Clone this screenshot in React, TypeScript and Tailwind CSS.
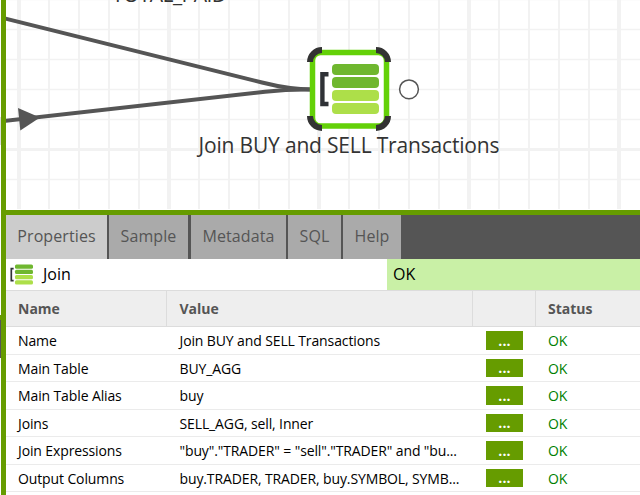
const tabs = [
  { label: 'Properties', cls: 'w-[101px] bg-[#cccccc] mr-[2px]' },
  { label: 'Sample', cls: 'w-[79px] bg-[#aaaaaa] mr-[3px]' },
  { label: 'Metadata', cls: 'w-[95px] bg-[#aaaaaa] mr-[2px]' },
  { label: 'SQL', cls: 'w-[53px] bg-[#aaaaaa] mr-[2px]' },
  { label: 'Help', cls: 'w-[58px] bg-[#aaaaaa]' },
];

const rows = [
  { name: 'Name', value: 'Join BUY and SELL Transactions', h: 'h-[28px]', btn: 'h-[19px]', text: '' },
  { name: 'Main Table', value: 'BUY_AGG', h: 'h-[27px]', btn: 'h-[18px]', text: 'pt-[2px]' },
  { name: 'Main Table Alias', value: 'buy', h: 'h-[28px]', btn: 'h-[19px]', text: '' },
  { name: 'Joins', value: 'SELL_AGG, sell, Inner', h: 'h-[27px]', btn: 'h-[18px]', text: 'pt-[2px]' },
  { name: 'Join Expressions', value: '"buy"."TRADER" = "sell"."TRADER" and "bu...', h: 'h-[28px]', btn: 'h-[19px]', text: '' },
  { name: 'Output Columns', value: 'buy.TRADER, TRADER, buy.SYMBOL, SYMB...', h: 'h-[27px]', btn: 'h-[18px]', text: 'pt-[2px]' },
];

const verticals = Array.from({ length: 21 }, (_, i) => 19 + i * 30);
const horizontals = [0, 1, 2, 3, 4, 5, 6].map((i) => -0.5 + i * 30);

function JoinIcon({ className }: { className: string }) {
  return (
    <svg className={className} viewBox="0 0 60 52" preserveAspectRatio="none">
      <path d="M9.5 11.2H3.4V41H9.5" fill="none" stroke="#2f3236" strokeWidth="4.4" />
      <rect x="13" y="1" width="47" height="11" rx="4" fill="#6fb72f" />
      <rect x="13" y="14" width="47" height="11" rx="4" fill="#6fb72f" />
      <rect x="13" y="27" width="47" height="11" rx="4" fill="#addf49" />
      <rect x="13" y="40" width="47" height="11" rx="4" fill="#addf49" />
    </svg>
  );
}

function Canvas() {
  return (
    <svg className="block h-[210px] w-[634px]" viewBox="6 0 634 210" fontFamily="'Open Sans', sans-serif">
      <rect x="6" width="634" height="210" fill="#fff" />
      <g stroke="#f2f2f2">
        {verticals.map((x, i) => (
          <path key={x} d={`M${x} 0V209`} strokeWidth={i % 5 === 0 ? 4 : 2} />
        ))}
        {horizontals.map((y, i) => (
          <path key={y} d={`M6 ${y}H640`} strokeWidth={i === 5 ? 3 : 1.5} />
        ))}
      </g>
      <g fill="none" stroke="#555" strokeWidth="4">
        <path d="M4 18.2L262 82.5Q290 89.5 312 89.5" />
        <path d="M4 121L265 91.8Q290 89 312 89.5" />
      </g>
      <path d="M18 108L40 117.5L20.3 130.5Z" fill="#555" />
      <text x="112" y="2" fontSize="21" fill="#333" textLength="115">TOTAL_PAID</text>
      <rect x="312.5" y="52.5" width="74" height="73.5" rx="8" fill="#fff" stroke="#64d108" strokeWidth="5.5" />
      <g fill="none" stroke="#333" strokeWidth="6">
        <path d="M310 62A12 12 0 0 1 322 50" />
        <path d="M376 50A12 12 0 0 1 388 62" />
        <path d="M310 116A12 12 0 0 0 322 128" />
        <path d="M376 128A12 12 0 0 0 388 116" />
      </g>
      <svg x="319" y="63" width="60" height="52">
        <JoinIcon className="h-[52px] w-[60px]" />
      </svg>
      <circle cx="409" cy="89.3" r="9.4" fill="#fff" stroke="#555" strokeWidth="1.5" />
      <text x="198.5" y="152.5" fontSize="21" fill="#333" textLength="301">Join BUY and SELL Transactions</text>
    </svg>
  );
}

export default function App() {
  return (
    <div className="flex h-[495px] w-[640px] overflow-hidden bg-white font-['Open_Sans',sans-serif]">
      <div className="flex w-px shrink-0 flex-col bg-white">
        <div className="mt-[117px] h-[28px] bg-[#dddddd]" />
        <div className="mt-[170px] h-[5px] bg-[#669c00]" />
        <div className="h-[38px] bg-[#555555]" />
      </div>
      <div className="w-[5px] shrink-0 bg-[#669c00]" />
      <main className="w-[634px] shrink-0">
        <Canvas />
        <div className="h-[5px] bg-[#669c00]" />
        <nav className="flex h-[44px] bg-[#555555] text-[16px] tracking-[0.1px] text-[#555555]">
          {tabs.map((t) => (
            <button key={t.label} className={`flex shrink-0 items-center justify-center pb-[2px] whitespace-nowrap ${t.cls}`}>
              {t.label}
            </button>
          ))}
        </nav>
        <div className="flex h-[31px] text-[16px] leading-[30px] text-black">
          <div className="flex w-[381px] pl-[4px]">
            <JoinIcon className="mt-[5px] h-[21px] w-[23px]" />
            <span className="ml-[10px]">Join</span>
          </div>
          <div className="flex-1 bg-[#c9f0a6] pl-[6px]">OK</div>
        </div>
        <div className="flex h-[37px] border-y border-[#dcdcdc] bg-[#eeeeee] text-[14px] leading-[35px] font-bold text-[#555555]">
          <div className="w-[161px] border-r border-[#dcdcdc] pl-[12px]">Name</div>
          <div className="w-[306px] border-r border-[#dcdcdc] pl-[12.5px]">Value</div>
          <div className="w-[63px] border-r border-[#dcdcdc]" />
          <div className="pl-[12px]">Status</div>
        </div>
        {rows.map((r) => (
          <div key={r.name} className={`flex items-center border-b border-[#ebebeb] text-[14px] leading-[20px] tracking-[-0.12px] whitespace-nowrap text-black ${r.h}`}>
            <div className={`w-[161px] pl-[12px] ${r.text}`}>{r.name}</div>
            <div className={`w-[319px] pl-[12.5px] ${r.text}`}>{r.value}</div>
            <button className={`flex w-[37px] items-center justify-center bg-[#669c00] font-bold tracking-[0.2px] text-white ${r.btn}`}>...</button>
            <div className={`pl-[25px] text-[#008000] ${r.text}`}>OK</div>
          </div>
        ))}
      </main>
    </div>
  );
}
